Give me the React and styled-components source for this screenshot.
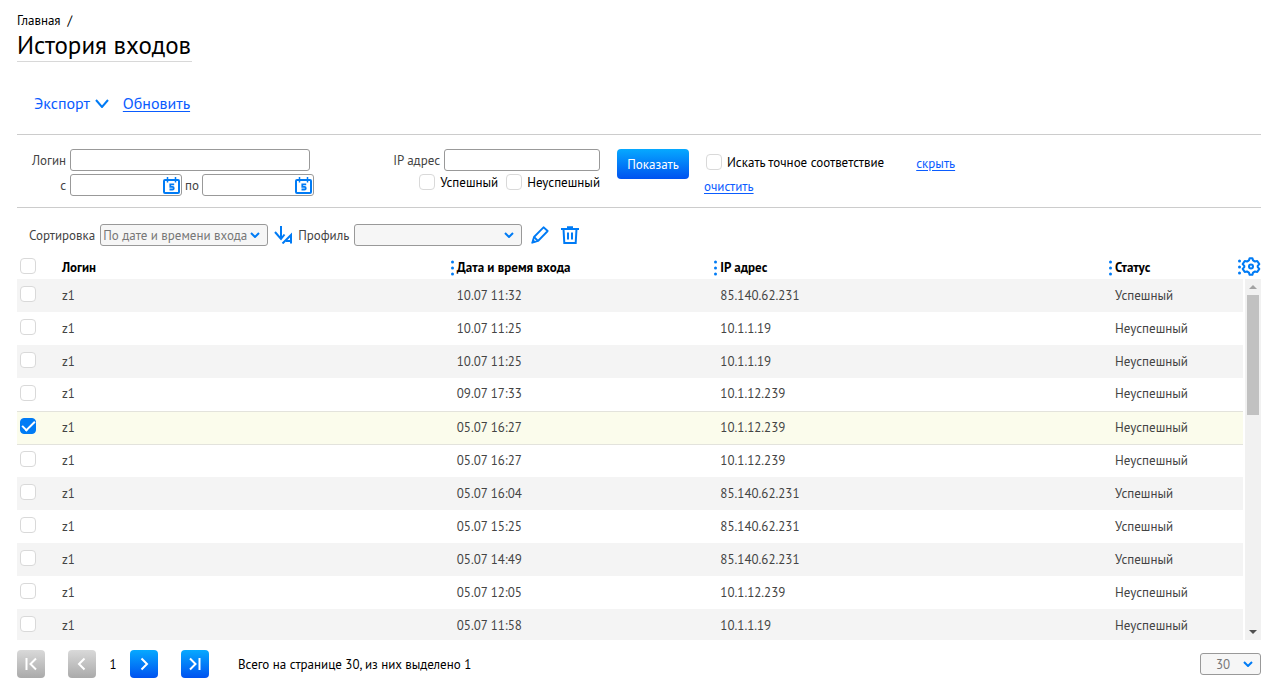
import React, { useState } from 'react';
import styled, { createGlobalStyle, css } from 'styled-components';

const blue = '#007bf5';
const link = '#0a5cff';

const GlobalStyle = createGlobalStyle`
  * {
    box-sizing: border-box;
  }

  body {
    margin: 0;
    background: #fff;
  }

  body, input, select, button {
    font-family: 'PT Sans', 'Noto Sans', sans-serif;
    font-size: 13px;
    line-height: 16px;
    color: #000;
  }
`;

const Page = styled.main`
  display: flex;
  flex-direction: column;
  height: 100vh;
  padding: 13px 14px 0 17px;
`;

const Breadcrumbs = styled.nav`
  display: flex;
  gap: 7px;

  a {
    color: #000;
    text-decoration: none;
  }
`;

const Title = styled.h1`
  align-self: flex-start;
  margin: 0;
  padding: 1px 1px 0 0;
  border-bottom: 1px solid #d8d8d8;
  font-size: 25px;
  font-weight: 400;
  line-height: 31px;
`;

const Actions = styled.div`
  display: flex;
  align-items: center;
  gap: 14px;
  height: 73px;
  padding: 10px 17px 0;
  border-bottom: 1px solid #ccc;
`;

const Link = styled.a`
  color: ${link};
  font-size: ${(props) => (props.$large ? '16px' : '13px')};
  line-height: ${(props) => (props.$large ? '20px' : '16px')};
  text-underline-offset: 2px;
`;

const ExportButton = styled.button`
  display: flex;
  align-items: center;
  gap: 5px;
  padding: 0;
  border: 0;
  background: none;
  color: ${link};
  font-size: 16px;
  line-height: 20px;
`;

const Filters = styled.form`
  display: flex;
  align-items: flex-start;
  height: 73px;
  padding: 14px 0 0;
  border-bottom: 1px solid #ccc;
`;

const FilterGrid = styled.div`
  display: grid;
  grid-template-columns: 49px auto;
  align-items: center;
  gap: 3px 4px;
  width: ${(props) => props.$width};
`;

const Label = styled.label`
  padding-top: 2px;
  color: #444;
  text-align: right;
  white-space: nowrap;
`;

const field = css`
  height: 22px;
  border: 1px solid #999;
  border-radius: 3px;
  outline: none;
`;

const TextInput = styled.input`
  ${field}
  width: ${(props) => props.$width};
  padding: 0 4px;
  background: #fff;
`;

const Dates = styled.div`
  display: flex;
  align-items: center;
  gap: 3px;
`;

const DateField = styled.span`
  display: inline-flex;
  position: relative;
`;

const CalendarButton = styled.button`
  position: absolute;
  top: 3px;
  right: 2px;
  display: flex;
  padding: 0;
  border: 0;
  background: none;
`;

const IpColumn = styled.div`
  display: flex;
  flex-direction: column;
  align-items: flex-end;
  gap: 2px;
  width: 225px;
  margin-right: 17px;
`;

const Inline = styled.div`
  display: flex;
  align-items: center;
  gap: ${(props) => props.$gap || '4px'};
`;

const CheckLabel = styled.label`
  display: flex;
  align-items: center;
  gap: 5px;
  white-space: nowrap;

  span {
    padding-top: 2px;
  }
`;

const Checkbox = styled.input.attrs({ type: 'checkbox' })`
  appearance: none;
  display: grid;
  place-items: center;
  flex: none;
  width: 16px;
  height: 16px;
  margin: 0;
  border: 1px solid #d9d9d9;
  border-radius: 4px;
  background: #fff;

  &:checked {
    border-color: ${blue};
    background: ${blue};
  }

  &:checked::after {
    content: '';
    width: 11px;
    height: 5px;
    margin-top: -3px;
    border: solid #fff;
    border-width: 0 0 2px 2px;
    transform: rotate(-45deg);
  }
`;

const SubmitButton = styled.button`
  width: 72px;
  height: 30px;
  padding: 2px 0 0;
  border: 0;
  border-radius: 4px;
  background: linear-gradient(#06a9ff, #0052f0);
  color: #fff;
`;

const Options = styled.div`
  display: flex;
  flex-direction: column;
  align-items: flex-start;
  gap: 8px;
  margin: 0 32px 0 15px;
  padding-top: 4px;

  label {
    padding-left: 2px;
  }
`;

const HideLink = styled(Link)`
  padding-top: 7px;
`;

const Toolbar = styled.div`
  display: flex;
  align-items: center;
  height: 46px;
  padding: 8px 0 0 12px;
`;

const SelectBox = styled.span`
  display: inline-flex;
  position: relative;
  margin: 0 ${(props) => props.$gap || '0px'} 0 5px;

  svg {
    position: absolute;
    top: 8px;
    right: 8px;
    pointer-events: none;
  }
`;

const Select = styled.select`
  ${field}
  appearance: none;
  width: ${(props) => props.$width};
  padding: 2px 20px 0 ${(props) => props.$indent || '2px'};
  background: #f6f6f6;
  color: #777;
`;

const IconButton = styled.button`
  display: flex;
  flex: none;
  padding: 0;
  border: 0;
  background: none;
  margin-right: ${(props) => props.$gap || '0px'};
`;

const Grid = styled.section`
  display: flex;
  flex: 1;
  gap: 2px;
  min-height: 0;
`;

const TableWrap = styled.div`
  flex: 1;
  overflow: hidden;
`;

const Table = styled.table`
  width: 100%;
  border-collapse: collapse;
  table-layout: fixed;

  th, td {
    padding: 0 0 0 7px;
    text-align: left;
  }

  th {
    height: 25px;
    padding-top: 2px;
    font-weight: 700;
  }

  td {
    height: 33px;
    color: #444;
  }

  td:first-child {
    padding: 0 0 3px 3px;
  }

  th:first-child {
    padding: 0 0 1px 3px;
  }
`;

const Row = styled.tr`
  background: ${(props) => (props.$striped ? '#f4f4f4' : '#fff')};

  ${(props) =>
    props.$selected &&
    css`
      border-top: 1px solid #e3e3dc;
      border-bottom: 1px solid #e3e3dc;
      background: #fbfcec;
    `}
`;

const Resizable = styled.div`
  display: flex;
  align-items: center;
  gap: 3px;
  margin-left: -6px;
`;

const Side = styled.div`
  display: flex;
  flex-direction: column;
  width: 16px;
`;

const SideHead = styled.div`
  display: flex;
  align-items: center;
  justify-content: flex-end;
  flex: none;
  height: 25px;
`;

const Scrollbar = styled.div`
  display: flex;
  flex-direction: column;
  align-items: center;
  flex: 1;
  background: #f1f1f1;
`;

const ScrollArrow = styled.span`
  display: grid;
  place-items: center;
  height: 16px;
`;

const ScrollTrack = styled.div`
  flex: 1;
  width: 12px;
`;

const ScrollThumb = styled.div`
  height: 36.5%;
  background: #c1c1c1;
`;

const Footer = styled.footer`
  display: flex;
  align-items: center;
  flex: none;
  height: 49px;
  padding-bottom: 2px;
`;

const PageButton = styled.button`
  display: grid;
  place-items: center;
  width: 28px;
  height: 28px;
  margin-right: ${(props) => props.$gap};
  padding: 0;
  border: 0;
  border-radius: 4px;
  background: linear-gradient(#06a9ff, #0052f0);

  &:disabled {
    background: linear-gradient(#d9d9d9, #aaa);
  }
`;

const PageNumber = styled.span`
  width: 34px;
  padding-top: 2px;
  text-align: center;
`;

const Summary = styled.span`
  flex: 1;
  padding-top: 2px;
`;

const DotsSvg = styled.svg`
  flex: none;
`;

const ChevronIcon = ({ width = 10, height = 6 }) => (
  <svg width={width} height={height} viewBox={`0 0 ${width} ${height}`} fill="none">
    <path
      d={`M1 1 L${width / 2} ${height - 1} L${width - 1} 1`}
      stroke={blue}
      strokeWidth="2"
    />
  </svg>
);

const CalendarIcon = () => (
  <svg width="17" height="17" viewBox="0 0 17 17" fill="none" stroke={blue}>
    <rect x="1" y="3" width="15" height="13" rx="1" strokeWidth="2" />
    <path d="M4.500 0v5.500M12.500 0v5.500" strokeWidth="1.500" />
    <path d="M11.200 7.300H7.300v2.500h2.200c1.700 0 1.700 2.700 0 2.700H6.500" strokeWidth="1.800" />
  </svg>
);

const SortIcon = () => (
  <svg width="19" height="18" viewBox="0 0 19 18" fill="none" stroke={blue} strokeWidth="2">
    <path d="M7 0v13M1 6l6 7 3.500-4.500" />
    <path d="M8.500 17.500 17 9v8.500M12 15h5" />
  </svg>
);

const PencilIcon = () => (
  <svg width="18" height="18" viewBox="0 0 18 18" fill="none" stroke={blue} strokeWidth="1.800">
    <path d="M1.300 16.700 3 11 12.500 1.300 16.700 5 7 15z" strokeLinejoin="round" />
    <path d="M3 11l4 4" />
    <path d="M.5 17.500l1.500-4.500 3 3z" fill={blue} stroke="none" />
  </svg>
);

const TrashIcon = () => (
  <svg width="18" height="18" viewBox="0 0 18 18" fill="none" stroke={blue} strokeWidth="2">
    <path d="M0 3h18M6 1.200h6M2.500 3l.8 14h11.400l.8-14" />
    <path d="M7 6.500v7M11 6.500v7" />
  </svg>
);

const GearIcon = () => (
  <svg width="20" height="19" viewBox="0 0 24 24" fill="none" stroke={blue} strokeWidth="2.600" strokeLinejoin="round">
    <path d="M9.400 4.300 10.300 1.500h3.400l.9 2.800 2.400 1.400 2.900-.7 2.600 4-2 2.300v1.400l2 2.300-2.600 4-2.900-.7-2.400 1.400-.9 2.800h-3.400l-.9-2.800L7 18.300l-2.900.7-2.600-4 2-2.300v-1.400L1.500 9l2.600-4 2.900.7z" />
    <circle cx="12" cy="12" r="2.500" />
  </svg>
);

const DotsIcon = () => (
  <DotsSvg width="3" height="16" viewBox="0 0 3 16" fill={blue}>
    <circle cx="1.500" cy="2" r="1.500" />
    <circle cx="1.500" cy="8" r="1.500" />
    <circle cx="1.500" cy="14" r="1.500" />
  </DotsSvg>
);

const PageIcon = ({ d }) => (
  <svg width="14" height="14" viewBox="0 0 14 14" fill="none" stroke="#fff" strokeWidth="2">
    <path d={d} />
  </svg>
);

const columns = ['Логин', 'Дата и время входа', 'IP адрес', 'Статус'];

const entries = [
  ['z1', '10.07 11:32', '85.140.62.231', 'Успешный'],
  ['z1', '10.07 11:25', '10.1.1.19', 'Неуспешный'],
  ['z1', '10.07 11:25', '10.1.1.19', 'Неуспешный'],
  ['z1', '09.07 17:33', '10.1.12.239', 'Неуспешный'],
  ['z1', '05.07 16:27', '10.1.12.239', 'Неуспешный'],
  ['z1', '05.07 16:27', '10.1.12.239', 'Неуспешный'],
  ['z1', '05.07 16:04', '85.140.62.231', 'Успешный'],
  ['z1', '05.07 15:25', '85.140.62.231', 'Успешный'],
  ['z1', '05.07 14:49', '85.140.62.231', 'Успешный'],
  ['z1', '05.07 12:05', '10.1.12.239', 'Неуспешный'],
  ['z1', '05.07 11:58', '10.1.1.19', 'Неуспешный'],
];

const DateInput = ({ id }) => (
  <DateField>
    <TextInput id={id} type="text" $width="112px" />
    <CalendarButton type="button" aria-label="Выбрать дату">
      <CalendarIcon />
    </CalendarButton>
  </DateField>
);

const CheckOption = ({ children }) => (
  <CheckLabel>
    <Checkbox />
    <span>{children}</span>
  </CheckLabel>
);

const FilterForm = () => (
  <Filters onSubmit={(e) => e.preventDefault()}>
    <FilterGrid $width="358px">
      <Label htmlFor="login">Логин</Label>
      <TextInput id="login" type="text" $width="240px" />
      <Label htmlFor="from">с</Label>
      <Dates>
        <DateInput id="from" />
        <Label htmlFor="to">по</Label>
        <DateInput id="to" />
      </Dates>
    </FilterGrid>
    <IpColumn>
      <Inline>
        <Label htmlFor="ip">IP адрес</Label>
        <TextInput id="ip" type="text" $width="156px" />
      </Inline>
      <Inline $gap="8px">
        <CheckOption>Успешный</CheckOption>
        <CheckOption>Неуспешный</CheckOption>
      </Inline>
    </IpColumn>
    <SubmitButton type="submit">Показать</SubmitButton>
    <Options>
      <CheckOption>Искать точное соответствие</CheckOption>
      <Link href="#clear">очистить</Link>
    </Options>
    <HideLink href="#hide">скрыть</HideLink>
  </Filters>
);

const SortBar = () => (
  <Toolbar>
    <Label htmlFor="sort">Сортировка</Label>
    <SelectBox $gap="6px">
      <Select id="sort" $width="168px">
        <option>По дате и времени входа</option>
      </Select>
      <ChevronIcon />
    </SelectBox>
    <IconButton type="button" aria-label="Направление сортировки" $gap="5px">
      <SortIcon />
    </IconButton>
    <Label htmlFor="profile">Профиль</Label>
    <SelectBox $gap="9px">
      <Select id="profile" $width="168px">
        <option></option>
      </Select>
      <ChevronIcon />
    </SelectBox>
    <IconButton type="button" aria-label="Редактировать" $gap="12px">
      <PencilIcon />
    </IconButton>
    <IconButton type="button" aria-label="Удалить">
      <TrashIcon />
    </IconButton>
  </Toolbar>
);

const App = () => {
  const [selected, setSelected] = useState([4]);

  const toggle = (index) =>
    setSelected((prev) =>
      prev.includes(index) ? prev.filter((i) => i !== index) : [...prev, index]
    );

  return (
    <>
      <GlobalStyle />
      <Page>
        <Breadcrumbs>
          <a href="#home">Главная</a>
          <span>/</span>
        </Breadcrumbs>
        <Title>История входов</Title>
        <Actions>
          <ExportButton type="button">
            Экспорт
            <ChevronIcon width={14} height={9} />
          </ExportButton>
          <Link href="#refresh" $large>
            Обновить
          </Link>
        </Actions>
        <FilterForm />
        <SortBar />
        <Grid>
          <TableWrap>
            <Table>
              <colgroup>
                <col style={{ width: 38 }} />
                <col style={{ width: '32.2%' }} />
                <col style={{ width: '21.5%' }} />
                <col style={{ width: '32.2%' }} />
                <col />
              </colgroup>
              <thead>
                <tr>
                  <th>
                    <Checkbox aria-label="Выбрать все" />
                  </th>
                  {columns.map((name, i) => (
                    <th key={name}>
                      {i === 0 ? (
                        name
                      ) : (
                        <Resizable>
                          <DotsIcon />
                          {name}
                        </Resizable>
                      )}
                    </th>
                  ))}
                </tr>
              </thead>
              <tbody>
                {entries.map((entry, i) => (
                  <Row key={i} $striped={i % 2 === 0} $selected={selected.includes(i)}>
                    <td>
                      <Checkbox
                        aria-label="Выбрать строку"
                        checked={selected.includes(i)}
                        onChange={() => toggle(i)}
                      />
                    </td>
                    {entry.map((value, j) => (
                      <td key={j}>{value}</td>
                    ))}
                  </Row>
                ))}
              </tbody>
            </Table>
          </TableWrap>
          <Side>
            <SideHead>
              <DotsIcon />
              <IconButton type="button" aria-label="Настройка столбцов">
                <GearIcon />
              </IconButton>
            </SideHead>
            <Scrollbar>
              <ScrollArrow>
                <svg width="8" height="4" viewBox="0 0 8 4">
                  <path d="M0 4l4-4 4 4z" fill="#a3a3a3" />
                </svg>
              </ScrollArrow>
              <ScrollTrack>
                <ScrollThumb />
              </ScrollTrack>
              <ScrollArrow>
                <svg width="8" height="4" viewBox="0 0 8 4">
                  <path d="M0 0l4 4 4-4z" fill="#505050" />
                </svg>
              </ScrollArrow>
            </Scrollbar>
          </Side>
        </Grid>
        <Footer>
          <PageButton type="button" aria-label="Первая страница" disabled $gap="23px">
            <PageIcon d="M2.500 1v12M12 1.500 6.500 7l5.500 5.500" />
          </PageButton>
          <PageButton type="button" aria-label="Предыдущая страница" disabled $gap="0px">
            <PageIcon d="M9.500 1.500 4 7l5.500 5.500" />
          </PageButton>
          <PageNumber>1</PageNumber>
          <PageButton type="button" aria-label="Следующая страница" $gap="23px">
            <PageIcon d="M4.500 1.500 10 7l-5.500 5.500" />
          </PageButton>
          <PageButton type="button" aria-label="Последняя страница" $gap="29px">
            <PageIcon d="M2 1.500 7.500 7 2 12.500M11.500 1v12" />
          </PageButton>
          <Summary>Всего на странице 30, из них выделено {selected.length}</Summary>
          <SelectBox>
            <Select aria-label="Строк на странице" $width="61px" $indent="15px">
              <option>30</option>
            </Select>
            <ChevronIcon />
          </SelectBox>
        </Footer>
      </Page>
    </>
  );
};

export default App;
